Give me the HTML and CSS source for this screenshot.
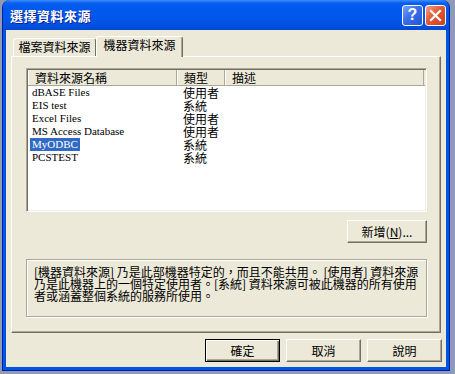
FILE: index.html
```html
<!DOCTYPE html>
<html lang="zh-Hant">
<head>
    <meta charset="UTF-8">
    <title>選擇資料來源</title>
    <link rel="stylesheet" href="styles.css">
</head>
<body>
    <div class="window">
        <div class="titlebar">
            <span class="title">選擇資料來源</span>
            <span class="cap-btn help">?</span>
            <span class="cap-btn close">
                <svg width="13" height="13" viewBox="0 0 13 13">
                    <path d="M2 2 L11 11 M11 2 L2 11" stroke="#fff" stroke-width="2.2" stroke-linecap="square"/>
                </svg>
            </span>
        </div>
        <div class="client">
            <div class="tabs">
                <div class="tab">檔案資料來源</div>
                <div class="tab active">機器資料來源</div>
            </div>
            <div class="panel">
                <div class="list">
                    <div class="list-head">
                        <div class="col">資料來源名稱</div>
                        <div class="col">類型</div>
                        <div class="col">描述</div>
                    </div>
                    <div class="row"><span class="name">dBASE Files</span><span>使用者</span><span></span></div>
                    <div class="row"><span class="name">EIS test</span><span>系統</span><span></span></div>
                    <div class="row"><span class="name">Excel Files</span><span>使用者</span><span></span></div>
                    <div class="row"><span class="name">MS Access Database</span><span>使用者</span><span></span></div>
                    <div class="row"><span class="name"><em class="selected">MyODBC</em></span><span>系統</span><span></span></div>
                    <div class="row"><span class="name">PCSTEST</span><span>系統</span><span></span></div>
                </div>
                <div class="new-row">
                    <button class="btn new-btn">新增(<u>N</u>)...</button>
                </div>
                <div class="note">
                    [機器資料來源] 乃是此部機器特定的，而且不能共用。 [使用者] 資料來源<br>
                    乃是此機器上的一個特定使用者。[系統] 資料來源可被此機器的所有使用<br>
                    者或涵蓋整個系統的服務所使用。
                </div>
            </div>
            <div class="actions">
                <button class="btn default">確定</button>
                <button class="btn">取消</button>
                <button class="btn">說明</button>
            </div>
        </div>
    </div>
</body>
</html>
```

FILE: styles.css
```css
* {
    box-sizing: border-box;
}
body {
    margin: 0;
    padding: 0 0 0 2px;
    background-color: #8e9ab6;
    font-family: "Noto Sans CJK TC", sans-serif;
    font-size: 12px;
    color: #000;
}
.window {
    width: 448px;
    height: 371px;
    display: flex;
    flex-direction: column;
    background-color: #0054e3;
    border: 1px solid #001ea0;
    border-top: 0;
    border-radius: 8px 8px 0 0;
    overflow: hidden;
}
.titlebar {
    height: 30px;
    flex: none;
    display: flex;
    align-items: center;
    padding: 0 3px 0 7px;
    background: linear-gradient(#3d8ff8 0, #0a5ff0 3px, #0058ee 8px, #0256ea 18px, #0050df 26px, #0048cf 30px);
}
.title {
    flex: 1;
    color: #fff;
    font-weight: 700;
    font-size: 13px;
    letter-spacing: 0.5px;
    text-shadow: 1px 1px #0b2196;
}
.cap-btn {
    width: 21px;
    height: 21px;
    margin-left: 2px;
    border: 1px solid #fff;
    border-radius: 3px;
    display: flex;
    align-items: center;
    justify-content: center;
    color: #fff;
}
.help {
    background: linear-gradient(135deg, #7aa4f6, #3b6ee6 45%, #2155d6);
    font-family: "Liberation Sans", sans-serif;
    font-weight: 700;
    font-size: 16px;
}
.close {
    background: linear-gradient(135deg, #f2a086, #e35a34 45%, #c7401c);
}
.client {
    flex: 1;
    margin: 0 3px 3px;
    background-color: #ece9d8;
    display: flex;
    flex-direction: column;
}
.tabs {
    height: 26px;
    display: flex;
    align-items: flex-end;
    padding-left: 7px;
}
.tab {
    width: 83px;
    height: 18px;
    border: 1px solid #fff;
    border-right-color: #716f64;
    border-bottom: 0;
    border-radius: 3px 3px 0 0;
    text-align: center;
    line-height: 16px;
}
.tab.active {
    width: 87px;
    height: 21px;
    margin-bottom: -1px;
    position: relative;
    background-color: #ece9d8;
    box-shadow: inset -1px 0 #aca899;
}
.panel {
    margin: 0 5px;
    height: 277px;
    border: 1px solid #fff;
    border-right-color: #716f64;
    border-bottom-color: #716f64;
    box-shadow: inset -1px -1px #aca899;
    padding: 11px 13px 0 14px;
}
.list {
    width: 401px;
    height: 144px;
    background-color: #fff;
    border: 1px solid #aca899;
    border-right-color: #fff;
    border-bottom-color: #fff;
    box-shadow: inset 1px 1px #716f64, inset -1px -1px #f1efe2;
    padding: 1px;
}
.list-head {
    display: grid;
    grid-template-columns: 149px 48px 199px;
    height: 16px;
    background-color: #ece9d8;
    border-bottom: 1px solid #aca899;
}
.list-head .col {
    padding-left: 6px;
    line-height: 15px;
    border-left: 1px solid #fff;
    border-right: 1px solid #aca899;
}
.row {
    display: grid;
    grid-template-columns: 149px 48px 1fr;
    height: 13px;
    line-height: 13px;
}
.row span {
    padding-left: 6px;
    white-space: nowrap;
}
.row .name {
    padding-left: 2px;
    font-family: "Liberation Serif", "Noto Sans CJK TC", serif;
    font-size: 11px;
}
.name em {
    font-style: normal;
}
.row .name:not(:has(em)) {
    padding-left: 4px;
}
.selected {
    display: inline-block;
    padding: 0 2px;
    background-color: #316ac5;
    color: #fff;
}
.new-row {
    display: flex;
    justify-content: flex-end;
    margin-top: 8px;
}
.btn {
    width: 75px;
    height: 23px;
    padding: 0;
    background-color: #ece9d8;
    border: 1px solid #fff;
    border-right-color: #716f64;
    border-bottom-color: #716f64;
    box-shadow: inset -1px -1px #aca899;
    font-family: "Noto Sans CJK TC", sans-serif;
    font-size: 12px;
    color: #000;
}
.new-btn {
    width: 80px;
}
.btn.default {
    border: 1px solid #000;
    box-shadow: inset 1px 1px #fff, inset -1px -1px #716f64, inset -2px -2px #aca899;
}
.note {
    margin-top: 16px;
    height: 58px;
    border: 1px solid #aca899;
    box-shadow: 1px 1px #fff, inset 1px 1px #fff;
    padding: 6px 0 0 7px;
    line-height: 12px;
    white-space: nowrap;
}
.actions {
    display: flex;
    justify-content: flex-end;
    gap: 6px;
    margin-top: 6px;
    padding-right: 4px;
}
```
